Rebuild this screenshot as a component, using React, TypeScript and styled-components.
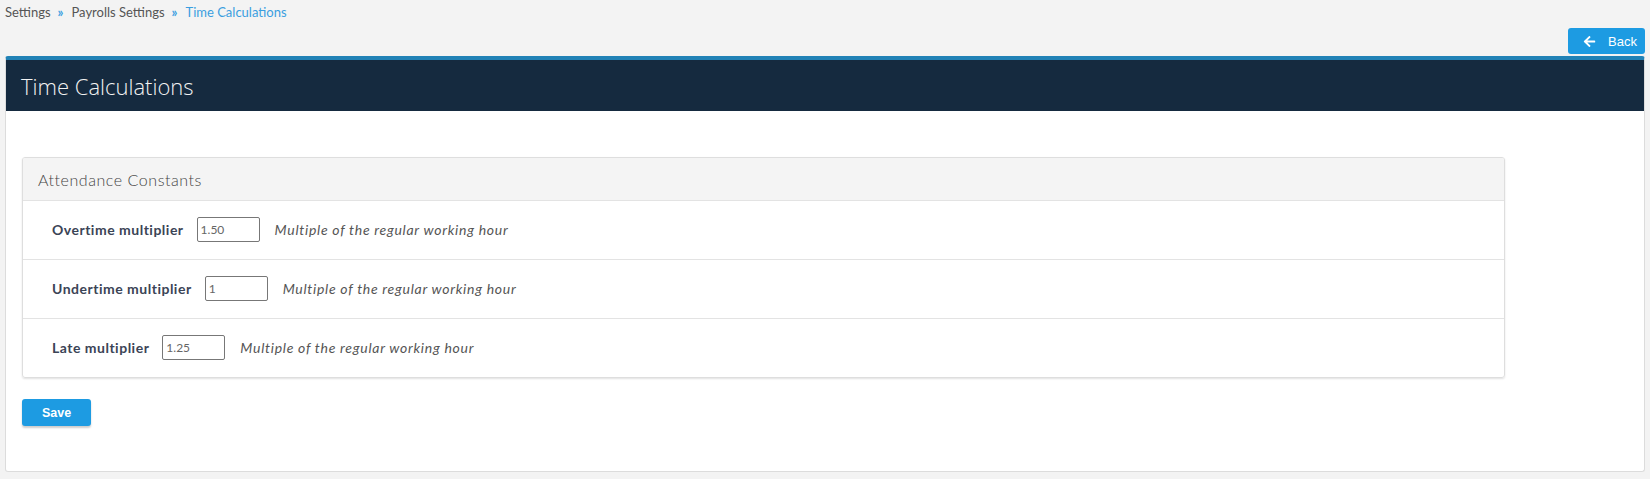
import React from 'react'
import styled, { createGlobalStyle } from 'styled-components'
import { FaArrowLeft } from 'react-icons/fa'

const rows = [
    { label: 'Overtime multiplier', value: '1.50' },
    { label: 'Undertime multiplier', value: '1' },
    { label: 'Late multiplier', value: '1.25' },
]

const App: React.FC = () => {
    return (
        <Page>
            <GlobalStyle />
            <Breadcrumb>
                <Crumb>Settings</Crumb>
                <Sep>»</Sep>
                <Crumb>Payrolls Settings</Crumb>
                <Sep>»</Sep>
                <Crumb $active>Time Calculations</Crumb>
            </Breadcrumb>
            <Toolbar>
                <BackButton>
                    <FaArrowLeft size={13} />
                    <span>Back</span>
                </BackButton>
            </Toolbar>
            <Panel>
                <PanelHeader>Time Calculations</PanelHeader>
                <PanelBody>
                    <Card>
                        <CardHeader>Attendance Constants</CardHeader>
                        {rows.map((row) => (
                            <Row key={row.label}>
                                <Label>{row.label}</Label>
                                <Input defaultValue={row.value} />
                                <Hint>Multiple of the regular working hour</Hint>
                            </Row>
                        ))}
                    </Card>
                    <SaveButton>Save</SaveButton>
                </PanelBody>
            </Panel>
        </Page>
    )
}

const GlobalStyle = createGlobalStyle`
    body {
        margin: 0;
        background: #f3f3f3;
        font-family: Lato, "Open Sans", sans-serif;
    }
`;

const Page = styled.div`
    width: 1650px;
    height: 479px;
    background: #f3f3f3;
`;

const Breadcrumb = styled.div`
    display: flex;
    align-items: center;
    height: 24px;
    padding-left: 5px;
    font-size: 13px;
`;

const Crumb = styled.span<{ $active?: boolean }>`
    color: ${(p) => (p.$active ? '#3a9ee0' : '#555')};
`;

const Sep = styled.span`
    color: #3a9ee0;
    margin: 0 8px 0 7px;
    font-weight: bold;
`;

const Toolbar = styled.div`
    display: flex;
    justify-content: flex-end;
    padding: 4px 5px 0 0;
`;

const BackButton = styled.button`
    display: flex;
    align-items: center;
    gap: 12px;
    width: 77px;
    height: 26px;
    padding: 0 0 0 15px;
    border: none;
    border-radius: 3px;
    background: #1d9be2;
    color: #fff;
    font-family: "Liberation Sans", Arial, sans-serif;
    font-size: 13px;
`;

const Panel = styled.div`
    margin: 2px 5px 0 5px;
    background: #fff;
    border: 1px solid #dcdcdc;
    border-top: 4px solid #2182b6;
    border-radius: 3px;
    height: 416px;
    box-sizing: border-box;
`;

const PanelHeader = styled.div`
    background: #152a3f;
    height: 51px;
    padding-left: 15px;
    display: flex;
    align-items: center;
    color: #f2f2f2;
    font-family: "Open Sans", sans-serif;
    font-weight: 300;
    font-size: 22px;
`;

const PanelBody = styled.div`
    padding: 46px 16px 0 16px;
`;

const Card = styled.div`
    width: 1483px;
    box-sizing: border-box;
    border: 1px solid #dedede;
    border-radius: 3px;
    box-shadow: 0 1px 2px rgba(0, 0, 0, 0.12);
    overflow: hidden;
`;

const CardHeader = styled.div`
    background: #f4f4f4;
    height: 42px;
    padding-left: 15px;
    display: flex;
    align-items: center;
    color: #444;
    font-size: 16px;
    font-weight: 300;
    letter-spacing: 0.55px;
`;

const Row = styled.div`
    display: flex;
    align-items: center;
    height: 56px;
    border-top: 1px solid #e3e3e3;
    padding-left: 29px;
    padding-bottom: 2px;
`;

const Label = styled.span`
    font-weight: bold;
    font-size: 14px;
    color: #3b4456;
    letter-spacing: 0.5px;
    margin-right: 13px;
`;

const Input = styled.input`
    width: 63px;
    height: 25px;
    box-sizing: border-box;
    border: 1px solid #777;
    border-radius: 2px;
    padding: 0 3px;
    font-family: Lato, sans-serif;
    font-size: 12px;
    color: #666;
    margin-right: 15px;
`;

const Hint = styled.span`
    font-style: italic;
    font-size: 14px;
    color: #555;
    letter-spacing: 0.72px;
`;

const SaveButton = styled.button`
    display: block;
    margin-top: 21px;
    width: 69px;
    height: 27px;
    border: none;
    border-radius: 3px;
    background: #1d9be2;
    color: #fff;
    font-family: "Liberation Sans", Arial, sans-serif;
    font-weight: bold;
    font-size: 12.5px;
    box-shadow: 0 2px 2px rgba(0, 0, 0, 0.2);
`;

export default App
